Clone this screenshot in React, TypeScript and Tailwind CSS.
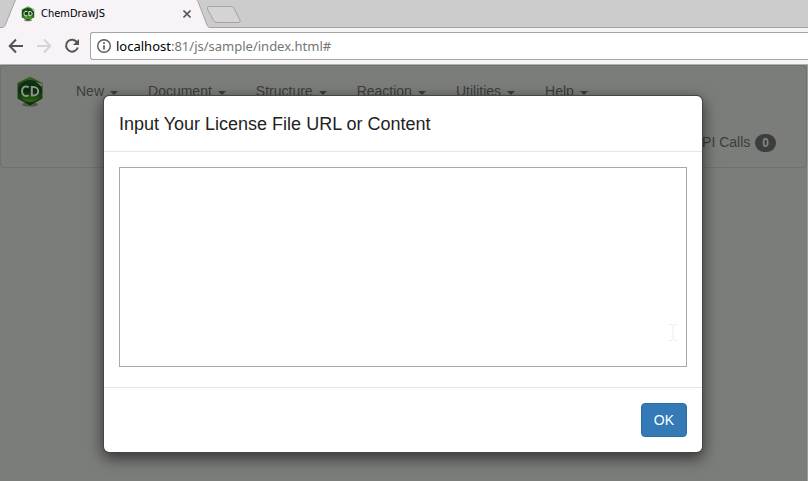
import React from "react";

const menus = ["New", "Document", "Structure", "Reaction", "Utilities", "Help"];

function Logo({ className, dim, id }: { className: string; dim?: boolean; id: string }) {
  return (
    <svg viewBox="0 0 26 32" className={className} aria-hidden="true">
      <defs>
        <linearGradient id={`${id}-rim`} x1="0" y1="0" x2="0" y2="1">
          <stop offset="0" stopColor={dim ? "#3f6a25" : "#74ad4d"} />
          <stop offset="0.3" stopColor={dim ? "#1d4611" : "#2f7a1c"} />
          <stop offset="0.7" stopColor={dim ? "#14400a" : "#1f6410"} />
          <stop offset="1" stopColor={dim ? "#0d2e08" : "#175010"} />
        </linearGradient>
        <linearGradient id={`${id}-face`} x1="0" y1="0" x2="0" y2="1">
          <stop offset="0" stopColor={dim ? "#123210" : "#1a4d14"} />
          <stop offset="0.5" stopColor={dim ? "#0b2c0b" : "#104010"} />
          <stop offset="0.75" stopColor={dim ? "#1a450f" : "#2c7a1c"} />
          <stop offset="1" stopColor={dim ? "#386a14" : "#69ac2c"} />
        </linearGradient>
      </defs>
      <ellipse cx="13" cy="28.500" rx="8" ry="2" fill="#303830" opacity="0.6" />
      <path d="M13 0.5 L25.5 7 V22.5 L13 29.5 L0.5 22.5 V7 Z" fill={`url(#${id}-rim)`} />
      <ellipse cx="13" cy="15" rx="12" ry="11" fill={`url(#${id}-face)`} />
      <path d="M19 6 L25 7.500 V11 Z" fill={dim ? "#707f6c" : "#c9dfc2"} />
      <path d="M11.800 11.200 C8 9.200 5 11.200 5 15.200 C5 19.200 8 21.200 11.800 19.400" fill="none" stroke={dim ? "#8e948c" : "#f3f8f0"} strokeWidth="2" />
      <path d="M14.800 11 H16.500 C22.800 11 22.800 19.500 16.500 19.500 H14.800 Z" fill="none" stroke={dim ? "#8e948c" : "#f3f8f0"} strokeWidth="2" />
    </svg>
  );
}

function TabStrip() {
  return (
    <div className="relative flex h-7 items-end bg-[#cccccc]">
      <svg className="absolute inset-0 h-7 w-64" viewBox="0 0 256 28" aria-hidden="true">
        <path d="M0 27.5 H2 Q4 27.5 5 25.5 L15 1 Q15.5 -0.5 17 -0.5 H195 Q197 -0.5 198 1.5 L207 25 Q208 27.5 210 27.5 H256 V28 H0 Z" fill="#f7f3f7" />
        <path d="M0 27.5 H2 Q4 27.5 5 25.5 L15 1 L16 -1 M196 -1 L198 1.5 L207 25 Q208 27.5 210 27.5 H256" fill="none" stroke="#a3a3a3" />
        <path d="M209.5 6.5 H231 Q233 6.5 234 8.5 L240 20 Q241 22.5 238.500 22.5 H217 Q214.500 22.5 213.500 20.500 L207.500 9 Q206.500 6.500 209.500 6.500 Z" fill="#d6d3d6" stroke="#a3a3a3" />
      </svg>
      <div className="relative flex h-7 w-48 items-center pl-5">
        <Logo id="tab" className="h-4 w-4" />
        <span className="ml-[5px] flex-1 font-['DejaVu_Sans_Condensed',Tahoma,sans-serif] text-[11px] leading-4 text-black">ChemDrawJS</span>
        <button type="button" aria-label="Close tab" className="mr-px flex size-2">
          <svg viewBox="0 0 8 8" className="size-2" aria-hidden="true">
            <path d="M0.500 0.500 L7.500 7.500 M7.500 0.500 L0.500 7.500" stroke="#5a5a5a" strokeWidth="1.600" />
          </svg>
        </button>
      </div>
      <div className="h-px flex-1 bg-[#a3a3a3]" />
    </div>
  );
}

function Toolbar() {
  return (
    <div className="flex h-[37px] items-center border-b border-[#b0b3af] bg-[#f7f3f7] pl-2">
      <button type="button" aria-label="Back" className="size-4">
        <svg viewBox="0 0 16 16" className="size-4" aria-hidden="true">
          <path d="M15 8 H2 M8 1.500 L1.700 8 L8 14.500" fill="none" stroke="#525552" strokeWidth="2" />
        </svg>
      </button>
      <button type="button" aria-label="Forward" className="ml-3 size-4">
        <svg viewBox="0 0 16 16" className="size-4" aria-hidden="true">
          <path d="M1 8 H14 M8 1.500 L14.300 8 L8 14.500" fill="none" stroke="#d6d3d6" strokeWidth="2" />
        </svg>
      </button>
      <button type="button" aria-label="Reload" className="ml-3 size-4">
        <svg viewBox="0 0 16 16" className="size-4" aria-hidden="true">
          <path d="M13.200 4.500 A6 6 0 1 0 13.800 9.500" fill="none" stroke="#525552" strokeWidth="2" />
          <path d="M15 1 V7 H9 Z" fill="#525552" />
        </svg>
      </button>
      <div className="ml-[10px] flex h-7 flex-1 items-center rounded-l-[3px] border border-r-0 border-[#a5a5a5] bg-white pl-[6px]">
        <svg viewBox="0 0 14 14" className="size-[14px]" aria-hidden="true">
          <circle cx="7" cy="7" r="6.300" fill="none" stroke="#5a5a5a" strokeWidth="1.400" />
          <path d="M7 6.200 V10.500 M7 3.300 V5" stroke="#5a5a5a" strokeWidth="1.700" />
        </svg>
        <a href="#" className="ml-[5px] font-['Noto_Sans',sans-serif] text-[13px] leading-5 text-[#757575]">
          <span className="text-black">localhost</span>:81/js/sample/index.html#
        </a>
      </div>
    </div>
  );
}

function Navbar() {
  return (
    <nav className="rounded border border-[#6f716e] text-[14px] leading-5 text-[#3c3d3b]">
      <div className="flex h-[50px] items-center pl-4">
        <Logo id="brand" dim className="mt-[2px] h-8 w-[26px]" />
        <ul className="ml-[18px] flex">
          {menus.map((name) => (
            <li key={name}>
              <button type="button" className="flex items-center px-[15px]">
                {name}
                <span className="ml-[6px] mt-1 border-x-4 border-t-4 border-x-transparent border-t-[#3c3d3b]" />
              </button>
            </li>
          ))}
        </ul>
      </div>
      <div className="flex h-[51px] items-center justify-end pr-[30px]">
        API Calls
        <span className="ml-[5px] mt-[3px] rounded-[10px] bg-[#3c3d3c] px-[7px] py-[3px] text-[12px] font-bold leading-3 text-[#848683]">0</span>
      </div>
    </nav>
  );
}

function LicenseDialog() {
  return (
    <div className="absolute left-0 right-px top-0 flex justify-center px-4 pt-[30px]">
      <div
        role="dialog"
        aria-labelledby="license-title"
        className="w-full max-w-[600px] rounded-[6px] border border-[#454645] bg-white bg-clip-padding shadow-[0_5px_15px_rgba(0,0,0,0.6)]"
      >
        <div className="border-b border-[#e5e5e5] px-[15px] pb-[14px] pt-4">
          <h4 id="license-title" className="text-[18px] font-medium leading-[25px] text-[#222222]">
            Input Your License File URL or Content
          </h4>
        </div>
        <div className="relative px-[15px] pb-5 pt-[15px]">
          <textarea
            aria-labelledby="license-title"
            className="block h-[200px] w-full resize-none border border-[#a9a9a9] bg-white outline-none"
          />
          <svg viewBox="0 0 8 17" className="absolute bottom-[46px] right-[25px] h-[17px] w-2" aria-hidden="true">
            <path d="M0 0.500 H3 M5 0.500 H8 M4 1 V16 M0 16.500 H3 M5 16.500 H8" fill="none" stroke="#ececec" />
          </svg>
        </div>
        <div className="flex justify-end border-t border-[#e5e5e5] p-[15px]">
          <button type="button" className="rounded border border-[#2e6da4] bg-[#337ab7] px-3 py-[6px] text-[14px] leading-5 text-white">
            OK
          </button>
        </div>
      </div>
    </div>
  );
}

export default function App() {
  return (
    <div className="flex min-h-screen flex-col font-['Liberation_Sans',Arial,sans-serif]">
      <TabStrip />
      <Toolbar />
      <main className="relative flex-1 border-r border-[#9b9d9a] bg-[#7b7d7a]">
        <Navbar />
        <LicenseDialog />
      </main>
    </div>
  );
}
